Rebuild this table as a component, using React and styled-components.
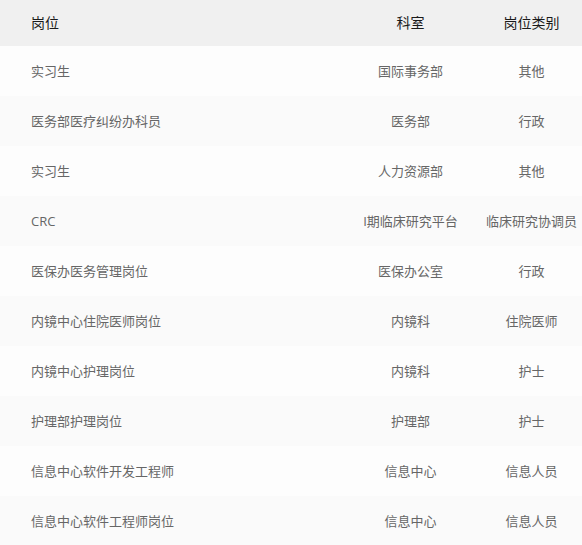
import React from 'react';
import styled, { createGlobalStyle } from 'styled-components';

const GlobalStyle = createGlobalStyle`
  html, body {
    margin: 0;
    padding: 0;
    background: #fff;
  }
  body {
    font-family: "Segoe UI", "Open Sans", "Noto Sans CJK SC", sans-serif;
  }
`;

const rows = [
  ['实习生', '国际事务部', '其他'],
  ['医务部医疗纠纷办科员', '医务部', '行政'],
  ['实习生', '人力资源部', '其他'],
  ['CRC', 'I期临床研究平台', '临床研究协调员'],
  ['医保办医务管理岗位', '医保办公室', '行政'],
  ['内镜中心住院医师岗位', '内镜科', '住院医师'],
  ['内镜中心护理岗位', '内镜科', '护士'],
  ['护理部护理岗位', '护理部', '护士'],
  ['信息中心软件开发工程师', '信息中心', '信息人员'],
  ['信息中心软件工程师岗位', '信息中心', '信息人员'],
];

const Table = styled.div`
  width: 582px;
  display: flex;
  flex-direction: column;
`;

const Row = styled.div`
  display: grid;
  grid-template-columns: 340px 141px 101px;
  align-items: center;
  height: ${p => (p.$head ? '46px' : '50px')};
  background: ${p => (p.$head ? '#f0f0f0' : p.$odd ? '#fafafa' : '#fdfdfd')};
`;

const Cell = styled.div`
  padding-left: ${p => (p.$first ? '31px' : '0')};
  text-align: ${p => (p.$first ? 'left' : 'center')};
  font-size: ${p => (p.$head ? '14px' : '13px')};
  color: ${p => (p.$head ? '#1a1a1a' : '#666')};
  white-space: nowrap;
  line-height: 1;
`;

export default function App() {
  return (
    <>
      <GlobalStyle />
      <Table>
        <Row $head>
          <Cell $head $first>岗位</Cell>
          <Cell $head>科室</Cell>
          <Cell $head>岗位类别</Cell>
        </Row>
        {rows.map((r, i) => (
          <Row key={i} $odd={i % 2 === 1}>
            <Cell $first>{r[0]}</Cell>
            <Cell>{r[1]}</Cell>
            <Cell>{r[2]}</Cell>
          </Row>
        ))}
      </Table>
    </>
  );
}
